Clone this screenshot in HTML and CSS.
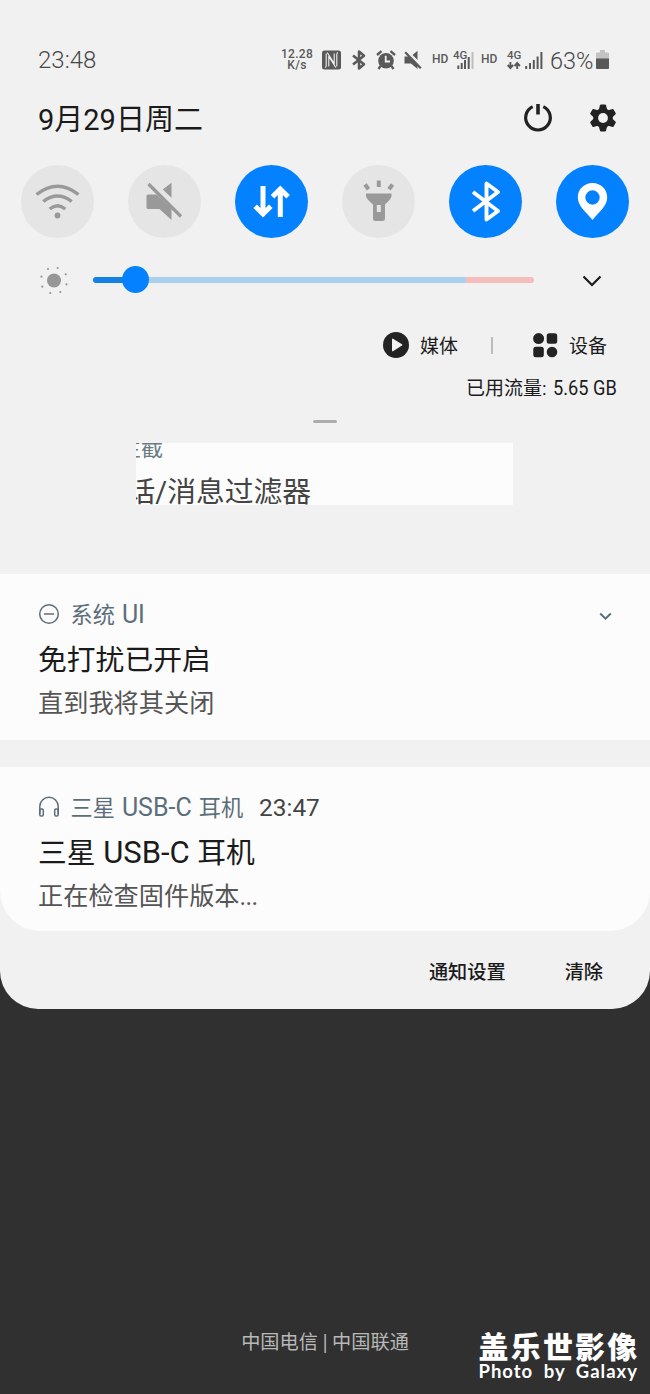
FILE: index.html
```html
<!DOCTYPE html>
<html lang="zh-CN">
<head>
<meta charset="utf-8">
<title>通知面板</title>
<link rel="stylesheet" href="styles.css">
</head>
<body>
<main class="screen">
  <section class="panel">
    <header class="status">
      <span class="clock">23:48</span>
      <div class="indicators">
        <span class="speed"><span>12.28</span><span>K/s</span></span>
        <svg class="nfc" width="19" height="20" viewBox="0 0 19 20"><rect x="0" y="0.5" width="19" height="19" rx="2.5" fill="#595959"/><path d="M3.200 17.500Q4.200 17 4.200 15.500V3.500M6.800 16.500V6.500L13.800 17.500M5.200 2.500L12.200 13.500V3.500M14.800 16.500V4.500Q14.800 3 15.800 2.500" fill="none" stroke="#f1f1f1" stroke-width="1.100"/></svg>
        <svg class="bt" width="14" height="20" viewBox="0 0 14 20"><path d="M1 5.5L12 14.3L7 18.5V1.5L12 5.7L1 14.5" fill="none" stroke="#595959" stroke-width="2.5" stroke-linejoin="round"/></svg>
        <svg class="alarm" width="20" height="20" viewBox="0 0 20 20"><circle cx="10" cy="10.8" r="7.8" fill="#595959"/><path d="M1 5L5.5 1.2M19 5L14.5 1.2M4.5 16L2.5 19M15.5 16L17.5 19" stroke="#595959" stroke-width="2.3"/><path d="M9.7 5.8V11.5H14" fill="none" stroke="#f1f1f1" stroke-width="1.8"/></svg>
        <svg class="mute" width="18" height="20" viewBox="0 0 18 20"><path d="M.5 6.5H4.5L13.5 15V19L7 13.5H.5ZM8.5 5L13.5 .8V9.8Z" fill="#595959"/><path d="M1.2 2.2L16.8 18.2" stroke="#595959" stroke-width="2.3"/></svg>
        <span class="hd hd-first">HD</span>
        <svg class="sim1" width="21" height="20" viewBox="0 0 21 20"><path d="M5.3 15.5V19M8.7 13V19M12 10V19M15.7 7V19" stroke="#595959" stroke-width="2"/><path d="M19.5 2V19" stroke="#bdbdbd" stroke-width="2"/><text x="0" y="8.8" class="net" stroke="#f1f1f1" stroke-width="1.5" paint-order="stroke">4G</text></svg>
        <span class="hd hd-second">HD</span>
        <svg class="sim2" width="15" height="20" viewBox="0 0 15 20"><text x="0" y="8.8" class="net">4G</text><path d="M3.4 12V18M.7 15L3.4 18L6.1 15M10.2 19V13M7.5 16L10.2 13L12.9 16" fill="none" stroke="#595959" stroke-width="1.9"/></svg>
        <svg class="bars" width="18" height="20" viewBox="0 0 18 20"><path d="M1.2 16V19M5 13V19M8.8 10V19M12.6 6.5V19M16.4 2V19" stroke="#595959" stroke-width="2"/></svg>
        <span class="percent">63%</span>
        <svg class="battery" width="14" height="20" viewBox="0 0 14 20"><path d="M4 0H9V2.5H12Q13 2.5 13 3.5V9H0V3.5Q0 2.5 1 2.5H4Z" fill="#c3c3c3"/><path d="M0 8.5H13V18Q13 19 12 19H1Q0 19 0 18Z" fill="#595959"/></svg>
      </div>
    </header>

    <div class="dateline">
      <h1 class="date">9月29日周二</h1>
      <div class="actions">
        <svg width="30" height="30" viewBox="0 0 30 30"><path d="M9.7 3.6A12.3 12.3 0 1 0 20.3 3.6" fill="none" stroke="#222" stroke-width="3.2"/><path d="M15 1V11.5" stroke="#222" stroke-width="3.6"/></svg>
        <svg width="30" height="30" viewBox="0 0 30 30"><g fill="#222"><circle cx="15" cy="15" r="9.8"/><path id="tooth" d="M10.6 7.5L12 2.2Q12.2 1.6 13 1.6H17Q17.8 1.6 18 2.2L19.4 7.5Z"/><use href="#tooth" transform="rotate(60 15 15)"/><use href="#tooth" transform="rotate(120 15 15)"/><use href="#tooth" transform="rotate(180 15 15)"/><use href="#tooth" transform="rotate(240 15 15)"/><use href="#tooth" transform="rotate(300 15 15)"/></g><circle cx="15" cy="15" r="4.9" fill="#f1f1f1"/></svg>
      </div>
    </div>

    <div class="tiles">
      <div class="tile"><svg viewBox="0 0 73 73"><g fill="none" stroke="#999" stroke-width="3.4"><path d="M15.5 29.5Q36.5 13 57.5 29.5"/><path d="M22.3 36.5Q36.5 25.5 50.7 36.5"/><path d="M28.7 44Q36.5 37.7 44.3 44"/></g><circle cx="36.5" cy="50.5" r="2.9" fill="#999"/></svg></div>
      <div class="tile"><svg viewBox="0 0 73 73"><path d="M18.5 31Q18.5 29.5 20 29.5H28.5L43.5 43.5V55L31.5 44H20Q18.5 44 18.5 42.5ZM34.8 24.5L43.5 17.8V32.8Z" fill="#999"/><path d="M20.5 19L53 51.5" stroke="#999" stroke-width="3.2"/></svg></div>
      <div class="tile tile-on"><svg viewBox="0 0 73 73"><path d="M28 21V48M20.2 41.2L28 49L35.8 41.2M45.3 52V25M37.5 31.8L45.3 24L53.1 31.8" fill="none" stroke="#fff" stroke-width="5"/></svg></div>
      <div class="tile"><svg viewBox="0 0 73 73"><path d="M24 28.5H49.5V31Q49.5 33.5 43 39.5V53.5Q43 56 40.5 56H33.5Q31 56 31 53.5V39.5Q24 33.5 24 31Z" fill="#999"/><rect x="34.8" y="40" width="4" height="7" fill="#e5e5e5"/><path d="M36.8 15.5V22M23 19.5L26.5 24.3M50.5 19.5L47 24.3" stroke="#999" stroke-width="4"/></svg></div>
      <div class="tile tile-on"><svg viewBox="0 0 73 73"><path d="M24 27L49 46L37.5 54.5V18.5L49 27L24 46" fill="none" stroke="#fff" stroke-width="3.9" stroke-linejoin="round"/></svg></div>
      <div class="tile tile-on"><svg viewBox="0 0 73 73"><path fill-rule="evenodd" d="M36.5 18C28 18 21.8 24.4 21.8 32.5C21.8 41 30 47 36.5 55C43 47 51.2 41 51.2 32.5C51.2 24.4 45 18 36.5 18ZM36.5 25.3A7.2 7.2 0 1 1 36.5 39.7A7.2 7.2 0 1 1 36.5 25.3Z" fill="#fff"/></svg></div>
    </div>

    <div class="brightness">
      <svg class="sun" width="30" height="30" viewBox="0 0 30 30" fill="#979797"><circle cx="15" cy="15.5" r="7"/><circle cx="9" cy="4" r="1.1"/><circle cx="18.7" cy="3" r="1.1"/><circle cx="26.7" cy="9.3" r="1.1"/><circle cx="27.5" cy="19.3" r="1.1"/><circle cx="21.3" cy="27" r="1.1"/><circle cx="11.3" cy="28" r="1.1"/><circle cx="3.3" cy="21.7" r="1.1"/><circle cx="2.5" cy="11.7" r="1.1"/></svg>
      <div class="track"><span class="thumb"></span></div>
      <svg class="expand" width="20" height="12" viewBox="0 0 20 12"><path d="M1.5 1.5L10 10L18.5 1.5" fill="none" stroke="#1b1b1b" stroke-width="2.2"/></svg>
    </div>

    <div class="shortcuts">
      <svg width="26" height="26" viewBox="0 0 26 26"><circle cx="13" cy="13" r="13" fill="#232323"/><path d="M9 7.2Q9 6.2 10 6.7L19 12.2Q19.8 12.9 19 13.6L10 19.2Q9 19.6 9 18.7Z" fill="#f1f1f1"/></svg>
      <span class="label">媒体</span>
      <span class="divider"></span>
      <svg width="25" height="25" viewBox="0 0 25 25" fill="#232323"><circle cx="5.6" cy="5.6" r="5.5"/><rect x="13.7" y=".3" width="10.5" height="10.5" rx="2.5"/><rect x=".3" y="13.8" width="10.5" height="10.5" rx="2.5"/><circle cx="19" cy="19" r="5.3"/></svg>
      <span class="label">设备</span>
    </div>
    <p class="usage">已用流量: <span class="amount">5.65 GB</span></p>
    <div class="handle"></div>

    <div class="fragment">
      <p class="fragment-app">拦截</p>
      <p class="fragment-title">话/消息过滤器</p>
    </div>

    <article class="card">
      <div class="source">
        <svg width="22" height="22" viewBox="0 0 22 22" fill="none" stroke="#5c6e79" stroke-width="1.5"><circle cx="11" cy="11" r="9.3"/><path d="M6 11H16"/></svg>
        <span class="app">系统 <span class="latin">UI</span></span>
        <svg class="fold" width="13" height="9" viewBox="0 0 13 9"><path d="M1.2 1.5L6.5 6.7L11.8 1.5" fill="none" stroke="#5c6e79" stroke-width="2"/></svg>
      </div>
      <h2 class="title">免打扰已开启</h2>
      <p class="text">直到我将其关闭</p>
    </article>

    <article class="card card-last">
      <div class="source">
        <svg width="22" height="22" viewBox="0 0 22 22" fill="none" stroke="#5c6e79" stroke-width="1.5"><path d="M1.8 18V10.5A9.2 9.2 0 0 1 20.2 10.5V18"/><rect x="1.8" y="13" width="3.5" height="7" rx="1.3"/><rect x="16.7" y="13" width="3.5" height="7" rx="1.3"/></svg>
        <span class="app">三星 <span class="latin">USB-C</span> 耳机</span>
        <span class="when">23:47</span>
      </div>
      <h2 class="title">三星 <span class="latin-title">USB-C</span> 耳机</h2>
      <p class="text">正在检查固件版本<span class="dots">...</span></p>
    </article>

    <footer class="footer"><span>通知设置</span><span>清除</span></footer>
  </section>

  <p class="carrier">中国电信 <span class="bar">|</span> 中国联通</p>
  <div class="watermark"><span class="mark-cn">盖乐世影像</span><span class="mark-en">Photo by Galaxy</span></div>
</main>
</body>
</html>
```

FILE: styles.css
```css
* { box-sizing: border-box; }
body, h1, h2, p { margin: 0; font-weight: 400; }
svg { display: block; flex: none; overflow: visible; }
.screen {
  position: relative;
  width: 650px;
  height: 1394px;
  overflow: hidden;
  background: #303030;
  color: #1b1b1b;
  font-family: Roboto, "Noto Sans CJK SC", sans-serif;
  white-space: nowrap;
}
.panel {
  height: 1009px;
  padding-top: 40px;
  background: #f1f1f1;
  border-radius: 0 0 38px 38px;
  overflow: hidden;
}

.status {
  display: flex;
  justify-content: space-between;
  align-items: center;
  height: 40px;
  padding: 0 40px 0 38px;
  color: #595959;
}
.clock { font-size: 24px; font-weight: 300; color: #484848; }
.indicators { display: flex; align-items: center; height: 20px; }
.speed {
  display: flex;
  flex-direction: column;
  align-items: center;
  width: 32px;
  font-size: 12px;
  line-height: 11.5px;
  font-weight: 500;
  letter-spacing: .3px;
}
.nfc, .bt, .alarm { margin-left: 10px; }
.nfc { margin-left: 9px; margin-right: 1px; }
.mute { margin-left: 8px; }
.hd { width: 16px; font-size: 12px; line-height: 18px; font-weight: 500; margin-top: -2px; }
.hd-first { margin-left: 10px; }
.sim1 { margin-left: 5px; }
.hd-second { margin-left: 7px; }
.sim2 { margin-left: 10px; }
.bars { margin-left: 3px; }
.net { font: 500 11.5px Roboto, sans-serif; fill: #595959; }
.percent { width: 43px; margin-left: 7px; padding-top: 1px; font-size: 23.5px; font-weight: 300; color: #484848; }
.battery { margin-left: 3px; }

.dateline {
  display: flex;
  justify-content: space-between;
  align-items: center;
  height: 76px;
  padding: 0 32px 0 38px;
}
.date { font-size: 29px; line-height: 40px; padding-top: 3px; }
.actions { display: flex; gap: 35px; }

.tiles { display: flex; justify-content: space-between; padding: 0 20.7px 0 20.5px; margin-top: 9px; }
.tile { width: 73px; height: 73px; border-radius: 50%; background: #e5e5e5; }
.tile-on { background: #0381fe; }

.brightness { display: flex; align-items: center; height: 30px; margin-top: 27px; padding-left: 38.5px; }
.track {
  position: relative;
  width: 441px;
  height: 6px;
  margin-left: 24.5px;
  border-radius: 3px;
  background: linear-gradient(90deg, #1480e4 0 42px, #accfee 42px 373px, #f5bdbb 373px);
}
.thumb {
  position: absolute;
  left: 28.5px;
  top: -11px;
  width: 27px;
  height: 27px;
  border-radius: 50%;
  background: #0381fe;
}
.expand { margin-left: 47.5px; margin-top: 2px; }

.shortcuts { display: flex; align-items: center; height: 30px; margin-top: 35px; padding-left: 383px; }
.label { width: 38px; margin-left: 11px; padding-top: 3px; font-size: 19px; line-height: 30px; }
.divider { width: 2px; height: 17px; margin: 0 40px 0 33px; background: #bcbcbc; }
.usage { height: 30px; margin-top: 13px; padding-left: 466px; font-size: 19px; line-height: 31px; }
.amount { display: inline-block; margin-left: 1.5px; font-size: 20px; transform: scaleX(.91); transform-origin: 0 50%; }
.handle { width: 24px; height: 3px; margin: 17px 0 0 313px; border-radius: 2px; background: #adadad; }

.fragment { width: 377px; height: 62px; margin: 20px 0 0 136px; overflow: hidden; background: #fcfcfc; }
.fragment-app { margin: -8px 0 0 -17px; font-size: 22px; line-height: 28px; color: #6b7b85; }
.fragment-title { margin: 9px 0 0 -9.5px; font-size: 28.8px; line-height: 40px; color: #444; }

.card { height: 166px; margin-top: 69px; padding: 24px 38px 0; background: #fcfcfc; }
.source { display: flex; align-items: center; height: 32px; line-height: 32px; }
.app { height: 32px; margin: 1px 0 0 10.5px; font-size: 22.2px; word-spacing: 1.5px; color: #5c6e79; }
.latin { font-size: 25px; }
.latin-title { font-size: 31px; }
.fold { margin: 4px 0 0 auto; }
.when { margin-left: 16px; padding-top: 1px; font-size: 24.4px; color: #444; }
.title { margin-top: 10px; font-size: 28.8px; line-height: 40px; word-spacing: .4px; }
.text { margin-top: 6px; font-size: 25.2px; line-height: 36px; color: #555; }
.dots { letter-spacing: -.6px; }
.card-last { height: 164px; margin-top: 27px; border-radius: 0 0 40px 40px; }

.footer { display: flex; justify-content: flex-end; gap: 59px; padding: 27px 47px 0 0; font-size: 19.2px; line-height: 30px; font-weight: 500; }

.carrier { margin-top: 319px; font-size: 19.2px; line-height: 30px; text-align: center; color: #b8b8b8; }
.bar { display: inline-block; transform: scaleY(1.15); }
.watermark { position: absolute; left: 478.5px; top: 1333px; display: flex; flex-direction: column; color: #fff; }
.mark-cn { font-size: 30px; line-height: 30px; font-weight: 900; letter-spacing: 2.2px; }
.mark-en { margin-top: -3px; font: 700 18.5px/22px Lato, sans-serif; letter-spacing: 1px; word-spacing: 5px; }
```
